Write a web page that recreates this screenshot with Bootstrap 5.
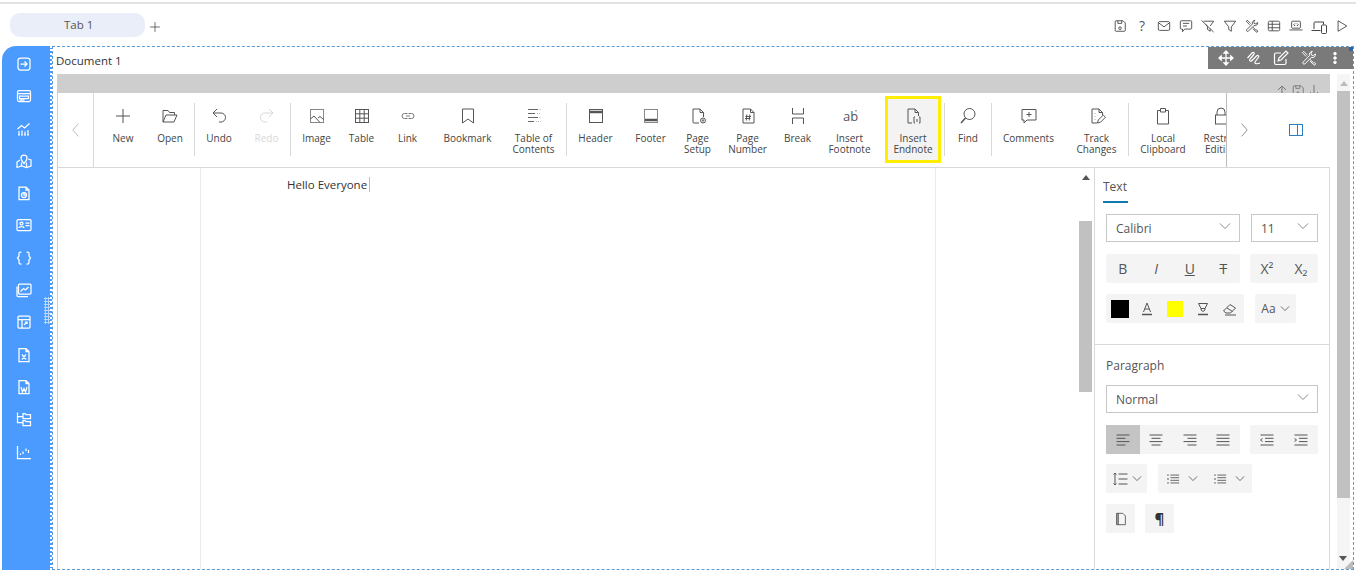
<!DOCTYPE html>
<html lang="en">
<head>
<meta charset="UTF-8">
<title>Document 1</title>
<link href="https://cdn.jsdelivr.net/npm/bootstrap@5.3.3/dist/css/bootstrap.min.css" rel="stylesheet">
<script src="https://cdn.jsdelivr.net/npm/bootstrap@5.3.3/dist/js/bootstrap.bundle.min.js"></script>
<style>
html, body { height: 572px; overflow: hidden; }
body { font-family: "Open Sans", "Noto Sans", sans-serif; color: #444; background: #fff; }
svg { display: block; fill: none; stroke: currentColor; stroke-width: 1; flex: none; }

.top-line { height: 2px; margin-top: 2px; background: #e2e2e2; }
.tab-row { height: 42px; padding: 9px 0 0 10px; }
.tab-pill { width: 135px; height: 24px; background: #e9eef9; border-radius: 10px; font-size: 11.5px; line-height: 23px; padding-left: 54px; color: #555; }
.tab-add { margin: 7px 0 0 3px; color: #333; }
.top-icons { gap: 8px; padding: 6px 7px 0 0; color: #444; }
.top-q { width: 14px; font-size: 14px; line-height: 14px; text-align: center; color: #555; }

.work { height: 524px; margin-left: 2px; }
.side-bar { width: 50px; background: #4b9bff; border-top-left-radius: 14px; border-right: 2px dotted #fff; color: #fff; padding-top: 10px; position: relative; }
.side-bar svg { stroke-width: 1.25; }
.side-btn { height: 32.3px; width: 44px; }
.drag-dots { position: absolute; left: 42px; top: 251px; width: 6px; height: 27px; background-image: radial-gradient(#b9d6fb 1px, transparent 1.2px); background-size: 3px 3px; }

.widget { width: 1302px; border: 1px dashed #5b9bd5; position: relative; }
.doc-title { font-size: 11.5px; line-height: 27px; height: 27px; padding-left: 3px; color: #333; }
.mini-tools { position: absolute; right: 0; top: 0; width: 145px; height: 22px; background: #7a7a7a; color: #fff; padding: 0 11px 0 10px; }
.blue-tick { position: absolute; right: 0; top: 0; width: 4px; height: 4px; background: #2f62a8; }
.resize-tick { position: absolute; right: 0; bottom: 0; width: 0; height: 0; border-left: 9px solid transparent; border-bottom: 9px solid #bbb; }

.doc-wrap { margin-left: 4px; height: 495px; }
.doc-box { width: 1273px; border-left: 1px solid #d0d0d0; position: relative; }
.gray-strip { height: 19px; background: #cecece; }
.strip-icons { position: absolute; top: 10px; right: 9px; height: 9px; overflow: hidden; gap: 2px; color: #777; }

.tool-row { height: 75px; border-bottom: 1px solid #d9d9d9; position: relative; }
.nav-left { width: 36px; border-right: 1px solid #d9d9d9; color: #aaa; }
.tool-track { width: 1132px; padding-left: 6px; overflow: hidden; }
.tool-btn { flex: none; padding-top: 13px; font-size: 10px; line-height: 11px; text-align: center; color: #444; white-space: nowrap; }
.tool-btn svg { margin: 0 auto 7px; color: #555; }
.tool-off, .tool-off svg { color: #d8d8d8; }
.tool-sep { flex: none; width: 1px; height: 53px; margin-top: 10px; background: #d9d9d9; }
.tool-hot { width: 56px; height: 67px; margin: 3px 3px 0 4px; padding-top: 7px; border: 3px solid #ffee00; background: #f3f3f3; }
.nav-right { width: 104px; border-left: 1px solid #bbb; padding: 0 26px 0 11px; color: #777; background: #fff; }
.pane-ic { color: #2f7fc8; }
.w36 { width: 36px; } .w39 { width: 39px; } .w41 { width: 41px; } .w46 { width: 46px; } .w47 { width: 47px; } .w48 { width: 48px; }
.w51 { width: 51px; } .w53 { width: 53px; } .w57 { width: 57px; } .w59 { width: 59px; } .w63 { width: 63px; } .w65 { width: 65px; }
.w67 { width: 67px; } .w68 { width: 68px; } .w73 { width: 73px; }

.edit-row { height: 401px; }
.page-zone { width: 1020px; padding-left: 142px; }
.page-sheet { width: 736px; height: 100%; border-left: 1px solid #ebebeb; border-right: 1px solid #ebebeb; padding: 9px 0 0 86px; font-size: 11.5px; line-height: 16px; color: #333; }
.caret-bar { display: inline-block; width: 1px; height: 15px; background: #bbb; margin-left: 2px; vertical-align: -3px; }
.bar-in { width: 16px; position: relative; }
.bar-thumb { position: absolute; left: 1px; top: 53px; width: 13px; height: 171px; background: #c1c1c1; }
.arrow-up { width: 0; height: 0; border-left: 4px solid transparent; border-right: 4px solid transparent; border-bottom: 5px solid #555; }
.arrow-dn { width: 0; height: 0; border-left: 4px solid transparent; border-right: 4px solid transparent; border-top: 5px solid #555; }
.bar-in .arrow-up { position: absolute; left: 4px; top: 7px; }

.side-panel { width: 236px; border-left: 1px solid #d9d9d9; border-right: 1px solid #d9d9d9; font-size: 12px; color: #555; }
.panel-tab { display: block; margin: 11px 0 0 8px; padding-bottom: 6px; border-bottom: 2px solid #0f7cb0; line-height: 16px; width: 25px; white-space: nowrap; color: #555; }
.panel-part { padding: 11px 11px 0 11px; }
.pick-box { height: 28px; border: 1px solid #c8c8c8; padding: 2px 8px 0 9px; font-size: 12px; color: #555; }
.pick-box svg { color: #888; margin-bottom: 6px; }
.pick-name { width: 134px; }
.pick-size { width: 67px; }
.btn-strip { height: 29px; background: #f4f4f4; color: #555; border-radius: 2px; }
.btn-cell { flex: 1 1 0; height: 100%; font-size: 14px; }
.cell-on { background: #c4c4c4; }
.row-a { margin-top: 12px; }
.row-b { margin-top: 11px; gap: 11px; }
.row-c { margin-top: 10px; gap: 11px; }
.row-d { margin-top: 11px; gap: 10px; }
.w134 { width: 134px; } .w68b { width: 68px; } .w138 { width: 138px; } .w41b { width: 41px; } .w94 { width: 94px; } .w29 { width: 29px; }
.swatch-k { width: 18px; height: 18px; background: #000; }
.swatch-y { width: 16px; height: 16px; background: #ff0; }
.panel-line { margin-top: 21px; border-top: 1px solid #d9d9d9; }
.para-head { margin-top: 13px; margin-bottom: 11px; line-height: 16px; }
.pilcrow { font-size: 15px; color: #333; }

.bar-out { width: 20px; padding-left: 7px; position: relative; }
.bar-out-track { width: 13px; height: 100%; background: #f5f5f5; position: relative; }
.bar-out-thumb { position: absolute; left: 0; top: 17px; width: 13px; height: 407px; background: #c1c1c1; }
.bar-out .arrow-up { position: absolute; left: 3px; top: 7px; border-bottom-color: #bbb; }
.bar-out .arrow-dn { position: absolute; left: 2px; top: 482px; }
</style>
</head>
<body>

<!-- icon set -->
<svg width="0" height="0" class="position-absolute">
  <symbol id="i-save" viewBox="0 0 16 16"><path d="M3.5 2h8l2.5 2.5V13a1 1 0 0 1-1 1H3.500a1 1 0 0 1-1-1V3a1 1 0 0 1 1-1zM5.500 2v3h4.500V2"/><circle cx="8" cy="10.500" r="1.500"/></symbol>
  <symbol id="i-mail" viewBox="0 0 16 16"><rect x="1.500" y="3" width="13" height="10" rx="1.500"/><path d="M2 4.500l6 4.500 6-4.500"/></symbol>
  <symbol id="i-chat" viewBox="0 0 16 16"><path d="M2.500 2h11a1 1 0 0 1 1 1v7.500a1 1 0 0 1-1 1H6.500L4 14.500v-3H2.500a1 1 0 0 1-1-1V3a1 1 0 0 1 1-1z"/><path d="M4.500 5h7M4.500 8h4.500"/></symbol>
  <symbol id="i-filter" viewBox="0 0 16 16"><path d="M1.500 2.500h13l-5 6.500v5l-3-2V9z"/></symbol>
  <symbol id="i-filter-off" viewBox="0 0 16 16"><path d="M3 2.500h11.500l-4 5.500M5.500 6l2 3v3l3 2v-3M.5 1.500l14 13.500"/></symbol>
  <symbol id="i-tools" viewBox="0 0 16 16"><path d="M11.300 1.500a3 3 0 0 0-2.700 4.100L2 12.200a1.300 1.300 0 0 0 1.800 1.800l6.600-6.600a3 3 0 0 0 4-3.500l-2 1.700-1.900-.5-.5-1.900z"/><path d="M6.500 5.200L3.700 2.400 2.400 1.500 1.500 2.400l.9 1.300 2.800 2.800M9.200 9.500l3.300 3.300a1.300 1.300 0 0 1 1.800 1.800 1.300 1.300 0 0 1-1.900-.1L9 11"/></symbol>
  <symbol id="i-grid" viewBox="0 0 16 16"><rect x="1.500" y="2.500" width="13" height="11" rx="1.500"/><path d="M1.500 6h13M1.500 10h13M6 2.500v11"/></symbol>
  <symbol id="i-laptop" viewBox="0 0 16 16"><rect x="3" y="2.500" width="10" height="8" rx="1"/><path d="M.5 12.500h15M7 5L5.500 6.500 7 8M9 5l1.500 1.500L9 8"/></symbol>
  <symbol id="i-devices" viewBox="0 0 16 16"><path d="M3 10V4a1 1 0 0 1 1-1h8.500v2.500M.5 11.500h9"/><rect x="10.500" y="6" width="5" height="8.500" rx="1"/></symbol>
  <symbol id="i-play" viewBox="0 0 16 16"><path d="M3.500 2v12l10-6z"/></symbol>
  <symbol id="i-plus" viewBox="0 0 20 20"><path d="M10 3v14M3 10h14"/></symbol>
  <symbol id="i-open" viewBox="0 0 20 20"><path d="M3 16V4.500h5l1.500 2h5V9M3 16h11l3-7H6z"/></symbol>
  <symbol id="i-undo" viewBox="0 0 20 20"><path d="M8 3L4 7l4 4M4 7h8a4.500 4.500 0 0 1 0 9h-2"/></symbol>
  <symbol id="i-redo" viewBox="0 0 20 20"><path d="M12 3l4 4-4 4M16 7H8a4.500 4.500 0 0 0 0 9h2"/></symbol>
  <symbol id="i-image" viewBox="0 0 20 20"><rect x="3.500" y="3.500" width="13" height="13" stroke="#888"/><path d="M3.500 13l3.500-3 6 6.500M11 12l2-1.500 3.500 3"/></symbol>
  <symbol id="i-table" viewBox="0 0 20 20"><rect x="3.500" y="3.500" width="13" height="13"/><path d="M3.500 7.800h13M3.500 12.200h13M7.800 3.500v13M12.200 3.500v13"/></symbol>
  <symbol id="i-link" viewBox="0 0 20 20"><path d="M9.500 7.500H6.500a2.500 2.500 0 0 0 0 5h3M10.500 12.500h3a2.500 2.500 0 0 0 0-5h-3M8 10h4" stroke="#777"/></symbol>
  <symbol id="i-mark" viewBox="0 0 20 20"><path d="M4.500 3h11v14L10 13l-5.500 4z"/></symbol>
  <symbol id="i-toc" viewBox="0 0 20 20"><path d="M4 3.500h10M4 7.500h7M4 11.500h10M4 15.500h6" stroke="#666"/><path d="M15.500 3.500h1M13 7.500h3.500M15.500 11.500h1M12 15.500h4.500" stroke="#bbb" stroke-dasharray="1 1"/></symbol>
  <symbol id="i-head" viewBox="0 0 20 20"><rect x="3.500" y="3.500" width="13" height="13"/><path d="M4 6h12" stroke-width="2.500"/></symbol>
  <symbol id="i-foot" viewBox="0 0 20 20"><rect x="3.500" y="3.500" width="13" height="13" stroke="#888"/><path d="M4 14h12" stroke-width="2.500"/></symbol>
  <symbol id="i-setup" viewBox="0 0 20 20"><path d="M11 17H6a1 1 0 0 1-1-1V3h7l3.500 3.500V11M12 3v3.500h3.500"/><circle cx="15" cy="14.500" r="2.500"/><circle cx="15" cy="14.500" r=".8"/></symbol>
  <symbol id="i-pnum" viewBox="0 0 20 20"><path d="M5 3h7.500L16 6.500V17H5zM12.500 3v3.500H16M8.800 8.500l-.6 6M11.800 8.500l-.6 6M7.500 10.500h5.500M7 12.500h5.500"/></symbol>
  <symbol id="i-break" viewBox="0 0 20 20"><path d="M4.500 2v6h11V2M4.500 18v-6h11v6"/></symbol>
  <symbol id="i-end" viewBox="0 0 20 20"><path d="M9 17H5V3h7l3.500 3.500V10M12 3v3.500h3.500"/><path d="M12 11h-1v6h1M16 11h1v6h-1M14 13v3"/></symbol>
  <symbol id="i-find" viewBox="0 0 20 20"><circle cx="11.500" cy="8" r="5.500"/><path d="M7.500 12L3 17" stroke-width="1.500"/></symbol>
  <symbol id="i-note" viewBox="0 0 20 20"><path d="M3 3.500h14v10.500H8l-3 3v-3H3zM10 6v5M7.500 8.500h5"/></symbol>
  <symbol id="i-track" viewBox="0 0 20 20"><path d="M10 17H5V3h7l3.500 3.500V9M12 3v3.500h3.500M8 7v.5M8 10v.5M8 13v.5"/><path d="M10.500 17l.8-3 5-5 2.200 2.200-5 5z"/></symbol>
  <symbol id="i-clip" viewBox="0 0 20 20"><path d="M7 4.500H4.500V18h11V4.500H13M7.500 6V2.500h5V6z"/></symbol>
  <symbol id="i-lock" viewBox="0 0 20 20"><path d="M6 9V6a4 4 0 0 1 8 0v3"/><rect x="4.500" y="9" width="11" height="9"/></symbol>
  <symbol id="i-chev" viewBox="0 0 12 8"><path d="M1 1.500l5 5 5-5"/></symbol>
  <symbol id="i-up" viewBox="0 0 14 14"><path d="M7 2v11M3 6l4-4 4 4M1 13h12"/></symbol>
  <symbol id="i-down" viewBox="0 0 14 14"><path d="M7 1v11M3 8l4 4 4-4M1 13h12"/></symbol>
  <symbol id="i-move" viewBox="0 0 16 16"><path d="M8 1v14M1 8h14M8 1L6 3.200h4zM8 15l-2-2.200h4zM1 8l2.200-2v4zM15 8l-2.200-2v4z" stroke-width="1.300"/></symbol>
  <symbol id="i-wave" viewBox="0 0 16 16"><path d="M1.500 8L6 3c1.500-1.500 3 0 1.800 1.500L4 9c-1.200 1.500.5 3 2 1.500L10.500 6c1.500-1.500 3 0 1.800 1.500L9 12c-.8 1.500 1.500 2.500 5 1" stroke-width="1.200"/></symbol>
  <symbol id="i-edit" viewBox="0 0 16 16"><path d="M13 9v4a1.500 1.500 0 0 1-1.500 1.500H3A1.500 1.500 0 0 1 1.500 13V4.500A1.500 1.500 0 0 1 3 3h5M6 8l7-7 2 2-7 7-2.800.8z" stroke-width="1.200"/></symbol>
  <symbol id="i-dots" viewBox="0 0 16 16"><circle cx="8" cy="3" r="1.500" fill="currentColor"/><circle cx="8" cy="8" r="1.500" fill="currentColor"/><circle cx="8" cy="13" r="1.500" fill="currentColor"/></symbol>
  <symbol id="i-pane" viewBox="0 0 16 14"><rect x="1.500" y="1.500" width="13" height="11"/><path d="M9.500 1.500v11"/></symbol>
  <symbol id="i-left" viewBox="0 0 12 20"><path d="M9 2L2 10l7 8"/></symbol>
  <symbol id="i-right" viewBox="0 0 12 20"><path d="M3 2l7 8-7 8"/></symbol>
  <symbol id="s-enter" viewBox="0 0 16 16"><rect x="2" y="2" width="12" height="12" rx="2.500"/><path d="M4.500 8h6.500M8.500 5.500L11 8l-2.500 2.500"/></symbol>
  <symbol id="s-form" viewBox="0 0 16 16"><rect x="1.500" y="2.500" width="13" height="11" rx="1.500"/><path d="M1.500 5.500h13M3.500 8h9v2.500h-9zM3.500 12h5"/></symbol>
  <symbol id="s-chart" viewBox="0 0 16 16"><path d="M1.500 8l4-3.500 3 2.500 5-4.500M3 10v4M6 9.500V14M9 10.500V14M12 9v5M2 14h2M5 14h2M8 14h2M11 14h2" stroke-width="1.200"/></symbol>
  <symbol id="s-map" viewBox="0 0 16 16"><path d="M4 7L1 9v5.500l4.500-1.500 5 1.500 4.500-1.500V7l-3-1M5.500 9.500V13M10.500 9.500V14"/><path d="M8 10.500S5 7.500 5 5a3 3 0 0 1 6 0c0 2.500-3 5.500-3 5.500z"/></symbol>
  <symbol id="s-doc" viewBox="0 0 16 16"><path d="M3 2h7l3 3v9.500H3zM10 2v3h3"/><circle cx="8" cy="10" r="2.500"/><path d="M8 8v2h2.500"/></symbol>
  <symbol id="s-card" viewBox="0 0 16 16"><rect x="1" y="2.500" width="14" height="11" rx="1"/><circle cx="5.500" cy="6.500" r="1.500"/><path d="M3 11c0-2 5-2 5 0M9.500 6h4M9.500 8.500h4"/></symbol>
  <symbol id="s-brace" viewBox="0 0 16 16"><path d="M5.500 2H4.500A1.500 1.500 0 0 0 3 3.500V6L1.500 8 3 10v2.500A1.500 1.500 0 0 0 4.500 14h1M10.500 2h1A1.500 1.500 0 0 1 13 3.500V6l1.500 2-1.500 2v2.500a1.500 1.500 0 0 1-1.500 1.500h-1"/></symbol>
  <symbol id="s-graph" viewBox="0 0 16 16"><rect x="2.500" y="2" width="12.500" height="10" rx="1"/><path d="M1 4.500v9a1 1 0 0 0 1 1h10M4.500 9.500l3-3 2 1.500 3-3"/></symbol>
  <symbol id="s-panel" viewBox="0 0 16 16"><rect x="2" y="2" width="12" height="12" rx="1"/><path d="M2 5.500h12M6 5.500V14M8 11l3-3M9 8h2v2"/></symbol>
  <symbol id="s-xls" viewBox="0 0 16 16"><path d="M3 1.500h7l3 3v10H3zM10 1.500v3h3M6 7.500l4 5M10 7.500l-4 5"/></symbol>
  <symbol id="s-word" viewBox="0 0 16 16"><path d="M3 1.500h7l3 3v10H3zM10 1.500v3h3M5 8l1.500 5L8 9.500 9.500 13 11 8"/></symbol>
  <symbol id="s-tree" viewBox="0 0 16 16"><path d="M1.500 1.500v10h5M1.500 5.500h5M7 2.500h2l1 1h4.500v4H7zM7 9.500h2l1 1h4.500v4H7z"/></symbol>
  <symbol id="s-bars" viewBox="0 0 16 16"><path d="M1.500 2v12.500H15M4.500 11V9.500M7 10V7.500M10 7V4.500M12.500 9V6"/></symbol>
  <symbol id="p-eraser" viewBox="0 0 16 16"><path d="M1.500 10l6.500-6.500 5.500 3.500-5 5H4zM5 7l5.500 3.500M3 14h11"/></symbol>
  <symbol id="p-fontc" viewBox="0 0 16 16"><path d="M4.500 11L8 2l3.500 9M5.800 8h4.400"/><path d="M3 13.500h10" stroke-width="1.500"/></symbol>
  <symbol id="p-hi" viewBox="0 0 16 16"><path d="M3.500 2.500h9L10 7.500v1.500L8 10.500 6 9V7.500zM6 7.500h4"/><path d="M3 13.500h10" stroke-width="1.500"/></symbol>
  <symbol id="p-al" viewBox="0 0 16 16"><path d="M1.500 3h13M1.500 6.300h9M1.500 9.600h13M1.500 13h9"/></symbol>
  <symbol id="p-ac" viewBox="0 0 16 16"><path d="M1.500 3h13M3.500 6.300h9M1.500 9.600h13M3.500 13h9"/></symbol>
  <symbol id="p-ar" viewBox="0 0 16 16"><path d="M1.500 3h13M5.500 6.300h9M1.500 9.600h13M5.500 13h9"/></symbol>
  <symbol id="p-aj" viewBox="0 0 16 16"><path d="M1.500 3h13M1.500 6.300h13M1.500 9.600h13M1.500 13h13"/></symbol>
  <symbol id="p-out" viewBox="0 0 16 16"><path d="M1.500 3h13M6 6.300h8.500M6 9.600h8.500M1.500 13h13M3.500 6.500L1.500 8l2 1.500"/></symbol>
  <symbol id="p-in" viewBox="0 0 16 16"><path d="M1.500 3h13M6 6.300h8.500M6 9.600h8.500M1.500 13h13M1.500 6.500L3.500 8l-2 1.500"/></symbol>
  <symbol id="p-spacing" viewBox="0 0 16 16"><path d="M6.500 3h9M6.500 8h9M6.500 13h9M3 2v12M1.500 3.500L3 2l1.500 1.500M1.500 12.500L3 14l1.500-1.500"/></symbol>
  <symbol id="p-list" viewBox="0 0 16 16"><path d="M5 3.500h10M5 6.500h10M5 9.500h10M5 12.500h10"/><path d="M1.500 3.500h1.500M1.500 8h1.500M1.500 12.500h1.500" stroke-width="1.500"/></symbol>
  <symbol id="p-page" viewBox="0 0 16 16"><path d="M3 1.500h7l3 3v10H3zM5 1.500v13M3.500 1.500v13"/></symbol>
</svg>

<div class="top-line"></div>

<!-- tabs -->
<div class="tab-row d-flex justify-content-between">
  <div class="d-flex">
    <div class="tab-pill">Tab 1</div>
    <svg width="14" height="14" class="tab-add"><use href="#i-plus"/></svg>
  </div>
  <div class="top-icons d-flex">
    <svg width="14" height="14"><use href="#i-save"/></svg>
    <span class="top-q">?</span>
    <svg width="14" height="14"><use href="#i-mail"/></svg>
    <svg width="14" height="14"><use href="#i-chat"/></svg>
    <svg width="14" height="14"><use href="#i-filter-off"/></svg>
    <svg width="14" height="14"><use href="#i-filter"/></svg>
    <svg width="14" height="14"><use href="#i-tools"/></svg>
    <svg width="14" height="14"><use href="#i-grid"/></svg>
    <svg width="14" height="14"><use href="#i-laptop"/></svg>
    <svg width="16" height="16"><use href="#i-devices"/></svg>
    <svg width="14" height="14"><use href="#i-play"/></svg>
  </div>
</div>

<div class="work d-flex">
  <!-- side bar -->
  <div class="side-bar d-flex flex-column">
    <div class="side-btn d-flex justify-content-center"><svg width="16" height="16"><use href="#s-enter"/></svg></div>
    <div class="side-btn d-flex justify-content-center"><svg width="16" height="16"><use href="#s-form"/></svg></div>
    <div class="side-btn d-flex justify-content-center"><svg width="16" height="16"><use href="#s-chart"/></svg></div>
    <div class="side-btn d-flex justify-content-center"><svg width="16" height="16"><use href="#s-map"/></svg></div>
    <div class="side-btn d-flex justify-content-center"><svg width="16" height="16"><use href="#s-doc"/></svg></div>
    <div class="side-btn d-flex justify-content-center"><svg width="16" height="16"><use href="#s-card"/></svg></div>
    <div class="side-btn d-flex justify-content-center"><svg width="16" height="16"><use href="#s-brace"/></svg></div>
    <div class="side-btn d-flex justify-content-center"><svg width="16" height="16"><use href="#s-graph"/></svg></div>
    <div class="side-btn d-flex justify-content-center"><svg width="16" height="16"><use href="#s-panel"/></svg></div>
    <div class="side-btn d-flex justify-content-center"><svg width="16" height="16"><use href="#s-xls"/></svg></div>
    <div class="side-btn d-flex justify-content-center"><svg width="16" height="16"><use href="#s-word"/></svg></div>
    <div class="side-btn d-flex justify-content-center"><svg width="16" height="16"><use href="#s-tree"/></svg></div>
    <div class="side-btn d-flex justify-content-center"><svg width="16" height="16"><use href="#s-bars"/></svg></div>
    <div class="drag-dots"></div>
  </div>

  <!-- widget -->
  <div class="widget">
    <div class="doc-title">Document 1</div>
    <div class="mini-tools d-flex align-items-center justify-content-between">
      <svg width="16" height="16"><use href="#i-move"/></svg>
      <svg width="16" height="16"><use href="#i-wave"/></svg>
      <svg width="16" height="16"><use href="#i-edit"/></svg>
      <svg width="16" height="16"><use href="#i-tools"/></svg>
      <svg width="14" height="14"><use href="#i-dots"/></svg>
    </div>
    <div class="blue-tick"></div>

    <div class="doc-wrap d-flex">
      <div class="doc-box">
        <div class="gray-strip"></div>
        <div class="strip-icons d-flex">
          <svg width="14" height="14"><use href="#i-up"/></svg>
          <svg width="14" height="14"><use href="#i-save"/></svg>
          <svg width="14" height="14"><use href="#i-down"/></svg>
        </div>

        <!-- ribbon -->
        <div class="tool-row d-flex">
          <div class="nav-left d-flex align-items-center justify-content-center"><svg width="12" height="16"><use href="#i-left"/></svg></div>
          <div class="tool-track d-flex">
            <div class="tool-btn w46"><svg width="20" height="20"><use href="#i-plus"/></svg>New</div>
            <div class="tool-btn w48"><svg width="20" height="20"><use href="#i-open"/></svg>Open</div>
            <div class="tool-sep"></div>
            <div class="tool-btn w48"><svg width="20" height="20"><use href="#i-undo"/></svg>Undo</div>
            <div class="tool-btn w47 tool-off"><svg width="20" height="20"><use href="#i-redo"/></svg>Redo</div>
            <div class="tool-sep"></div>
            <div class="tool-btn w51"><svg width="20" height="20"><use href="#i-image"/></svg>Image</div>
            <div class="tool-btn w39"><svg width="20" height="20"><use href="#i-table"/></svg>Table</div>
            <div class="tool-btn w53"><svg width="20" height="20"><use href="#i-link"/></svg>Link</div>
            <div class="tool-btn w67"><svg width="20" height="20"><use href="#i-mark"/></svg>Bookmark</div>
            <div class="tool-btn w65"><svg width="20" height="20"><use href="#i-toc"/></svg>Table of<br>Contents</div>
            <div class="tool-sep"></div>
            <div class="tool-btn w57"><svg width="20" height="20"><use href="#i-head"/></svg>Header</div>
            <div class="tool-btn w53"><svg width="20" height="20"><use href="#i-foot"/></svg>Footer</div>
            <div class="tool-btn w41"><svg width="20" height="20"><use href="#i-setup"/></svg>Page<br>Setup</div>
            <div class="tool-btn w59"><svg width="20" height="20"><use href="#i-pnum"/></svg>Page<br>Number</div>
            <div class="tool-btn w41"><svg width="20" height="20"><use href="#i-break"/></svg>Break</div>
            <div class="tool-btn w63"><svg width="20" height="20" viewBox="0 0 20 20"><text x="3" y="15" font-size="13" fill="#555" stroke="none">ab</text><path d="M16 4v1.500"/></svg>Insert<br>Footnote</div>
            <div class="tool-btn tool-hot"><svg width="20" height="20"><use href="#i-end"/></svg>Insert<br>Endnote</div>
            <div class="tool-sep"></div>
            <div class="tool-btn w46"><svg width="20" height="20"><use href="#i-find"/></svg>Find</div>
            <div class="tool-sep"></div>
            <div class="tool-btn w73"><svg width="20" height="20"><use href="#i-note"/></svg>Comments</div>
            <div class="tool-btn w63"><svg width="20" height="20"><use href="#i-track"/></svg>Track<br>Changes</div>
            <div class="tool-sep"></div>
            <div class="tool-btn w68"><svg width="20" height="20"><use href="#i-clip"/></svg>Local<br>Clipboard</div>
            <div class="tool-btn w48"><svg width="20" height="20"><use href="#i-lock"/></svg>Restrict<br>Editing</div>
          </div>
          <div class="nav-right d-flex align-items-center justify-content-between">
            <svg width="12" height="16"><use href="#i-right"/></svg>
            <svg width="16" height="14" class="pane-ic"><use href="#i-pane"/></svg>
          </div>
        </div>

        <!-- editor -->
        <div class="edit-row d-flex">
          <div class="page-zone">
            <div class="page-sheet">Hello Everyone<span class="caret-bar"></span></div>
          </div>
          <div class="bar-in"><div class="arrow-up"></div><div class="bar-thumb"></div></div>

          <div class="side-panel">
            <div class="panel-tab">Text</div>
            <div class="panel-part">
              <div class="d-flex justify-content-between">
                <div class="pick-box pick-name d-flex align-items-center justify-content-between">Calibri <svg width="12" height="8"><use href="#i-chev"/></svg></div>
                <div class="pick-box pick-size d-flex align-items-center justify-content-between">11 <svg width="12" height="8"><use href="#i-chev"/></svg></div>
              </div>
              <div class="d-flex justify-content-between row-a">
                <div class="btn-strip w134 d-flex">
                  <div class="btn-cell d-flex align-items-center justify-content-center">B</div>
                  <div class="btn-cell d-flex align-items-center justify-content-center fst-italic">I</div>
                  <div class="btn-cell d-flex align-items-center justify-content-center text-decoration-underline">U</div>
                  <div class="btn-cell d-flex align-items-center justify-content-center text-decoration-line-through">T</div>
                </div>
                <div class="btn-strip w68b d-flex">
                  <div class="btn-cell d-flex align-items-center justify-content-center">X²</div>
                  <div class="btn-cell d-flex align-items-center justify-content-center">X₂</div>
                </div>
              </div>
              <div class="d-flex row-b">
                <div class="btn-strip w138 d-flex">
                  <div class="btn-cell d-flex align-items-center justify-content-center"><div class="swatch-k"></div></div>
                  <div class="btn-cell d-flex align-items-center justify-content-center"><svg width="16" height="16"><use href="#p-fontc"/></svg></div>
                  <div class="btn-cell d-flex align-items-center justify-content-center"><div class="swatch-y"></div></div>
                  <div class="btn-cell d-flex align-items-center justify-content-center"><svg width="16" height="16"><use href="#p-hi"/></svg></div>
                  <div class="btn-cell d-flex align-items-center justify-content-center"><svg width="16" height="16"><use href="#p-eraser"/></svg></div>
                </div>
                <div class="btn-strip w41b d-flex align-items-center justify-content-center gap-1">Aa <svg width="10" height="7"><use href="#i-chev"/></svg></div>
              </div>
            </div>
            <div class="panel-line"></div>
            <div class="panel-part pt-0">
              <div class="para-head">Paragraph</div>
              <div class="pick-box d-flex align-items-center justify-content-between">Normal <svg width="12" height="8"><use href="#i-chev"/></svg></div>
              <div class="d-flex justify-content-between row-a">
                <div class="btn-strip w134 d-flex">
                  <div class="btn-cell cell-on d-flex align-items-center justify-content-center"><svg width="16" height="16"><use href="#p-al"/></svg></div>
                  <div class="btn-cell d-flex align-items-center justify-content-center"><svg width="16" height="16"><use href="#p-ac"/></svg></div>
                  <div class="btn-cell d-flex align-items-center justify-content-center"><svg width="16" height="16"><use href="#p-ar"/></svg></div>
                  <div class="btn-cell d-flex align-items-center justify-content-center"><svg width="16" height="16"><use href="#p-aj"/></svg></div>
                </div>
                <div class="btn-strip w68b d-flex">
                  <div class="btn-cell d-flex align-items-center justify-content-center"><svg width="16" height="16"><use href="#p-out"/></svg></div>
                  <div class="btn-cell d-flex align-items-center justify-content-center"><svg width="16" height="16"><use href="#p-in"/></svg></div>
                </div>
              </div>
              <div class="d-flex row-c">
                <div class="btn-strip w41b d-flex align-items-center justify-content-center gap-1"><svg width="16" height="16"><use href="#p-spacing"/></svg><svg width="10" height="7"><use href="#i-chev"/></svg></div>
                <div class="btn-strip w94 d-flex">
                  <div class="btn-cell d-flex align-items-center justify-content-center gap-2"><svg width="14" height="14"><use href="#p-list"/></svg><svg width="10" height="7"><use href="#i-chev"/></svg></div>
                  <div class="btn-cell d-flex align-items-center justify-content-center gap-2"><svg width="14" height="14"><use href="#p-list"/></svg><svg width="10" height="7"><use href="#i-chev"/></svg></div>
                </div>
              </div>
              <div class="d-flex row-d">
                <div class="btn-strip w29 d-flex align-items-center justify-content-center"><svg width="14" height="14"><use href="#p-page"/></svg></div>
                <div class="btn-strip w29 d-flex align-items-center justify-content-center pilcrow fw-bold">¶</div>
              </div>
            </div>
          </div>
        </div>
      </div>

      <div class="bar-out">
        <div class="bar-out-track">
          <div class="arrow-up"></div>
          <div class="bar-out-thumb"></div>
          <div class="arrow-dn"></div>
        </div>
      </div>
    </div>
    <div class="resize-tick"></div>
  </div>
</div>

</body>
</html>
